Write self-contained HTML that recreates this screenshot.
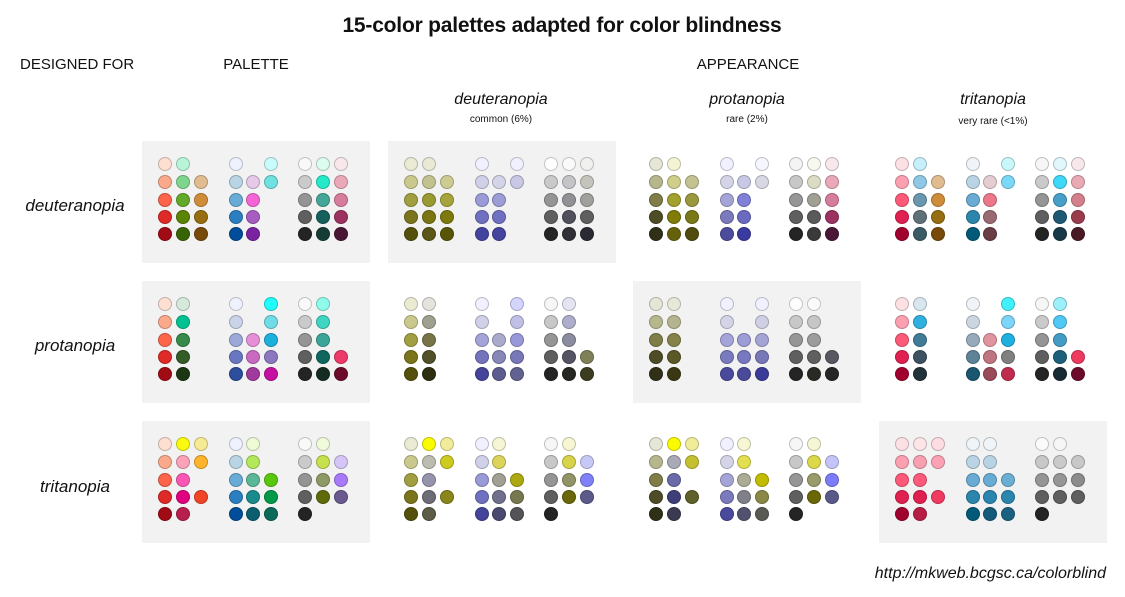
<!DOCTYPE html>
<html><head><meta charset="utf-8"><style>
body{margin:0;width:1125px;height:597px;background:#fff;position:relative;overflow:hidden;font-family:"Liberation Sans",sans-serif;color:#111}
.t{position:absolute;white-space:nowrap}
.p{position:absolute;width:228px;height:122px}
.g{background:#f2f2f2}
.d{position:absolute;width:12px;height:12px;border-radius:50%;border:1px solid rgba(0,0,0,0.22);box-sizing:content-box}
.c{transform:translateX(-50%)}
</style></head><body>
<div class="t c" style="left:562px;top:14px;font-size:21px;font-weight:bold;letter-spacing:-0.2px">15-color palettes adapted for color blindness</div>
<div class="t" style="left:20px;top:56px;font-size:15px">DESIGNED FOR</div>
<div class="t c" style="left:256px;top:56px;font-size:15px">PALETTE</div>
<div class="t c" style="left:748px;top:56px;font-size:15px">APPEARANCE</div>
<div class="t c" style="left:501px;top:91px;font-size:16px;font-style:italic">deuteranopia</div>
<div class="t c" style="left:501px;top:114px;font-size:10px">common (6%)</div>
<div class="t c" style="left:747px;top:91px;font-size:16px;font-style:italic">protanopia</div>
<div class="t c" style="left:747px;top:114px;font-size:10px">rare (2%)</div>
<div class="t c" style="left:993px;top:91px;font-size:16px;font-style:italic">tritanopia</div>
<div class="t c" style="left:993px;top:116px;font-size:10px">very rare (&lt;1%)</div>
<div class="t c" style="left:75px;top:196px;font-size:17px;font-style:italic">deuteranopia</div>
<div class="t c" style="left:75px;top:336px;font-size:17px;font-style:italic">protanopia</div>
<div class="t c" style="left:75px;top:477px;font-size:17px;font-style:italic">tritanopia</div>
<div class="t" style="right:19px;top:565px;font-size:16px;font-style:italic">http://mkweb.bcgsc.ca/colorblind</div>
<div id="root"></div>
<script>
var P={
P1:["fde0d2 b8f5d8 _ eef2ff _ c8fbfb f9f9f9 ddfcf0 f8e8ec","fba98a 80d58e e0bc90 b9d4e4 e6c8e8 70e0e0 cacaca 25e9c8 eaa8b8","fc654a 62a92b cf8d3a 69abd5 f665d6 _ 959595 42a796 d67c9c","df2a28 5b8304 966d10 2b7fc1 a65cc0 _ 5f5f5f 16605d 9c3260","a10b14 376506 784a0a 004d9a 7b22a0 _ 242424 163c36 4a1736"],
P2:["fde0d2 d6eadc _ eef2ff _ 1ffdfd f9f9f9 90fbeb _","fba98a 00c391 _ cad3e8 _ 70dce7 cacaca 40d4c3 _","fc654a 378a4a _ 9ca8d8 e590d6 1cb0dc 959595 3ba59a _","df2a28 335c28 _ 6878c0 c86ac0 8c78c0 5f5f5f 0e665e ee3a68","a10b14 1c3712 _ 2c4e9c a03a9c c610a2 242424 142c22 6c0c2a"],
P3:["fde0d2 fafa10 f6ea95 eef2ff eefbd6 _ f9f9f9 f0fbdb _","fba98a fba2b8 fdb42c b9d4e4 b2e85a _ cacaca c6e14e d6c6f8","fc654a fb56b6 _ 69abd5 5ab898 58c80c 959595 8e9a66 a97af8","df2a28 e00080 f04526 2b7fc1 1a8a8c 029948 5f5f5f 5f6a0a 6a5a90","a10b14 b81e4e _ 004d9a 0b5e6e 0b6a5a 242424 _ _"],
D1:["ebebd4 e9e9d6 _ f0f0ff _ f0f0fe fdfdfd fafafa f0f0ef","cbc88e c2c290 cccb92 d0d0e8 d4d4e8 c8c8e4 c9c9c9 c4c4c8 c4c4bc","a19f41 9a9932 a6a43a 9a9ad6 9c9cd6 _ 959595 919196 a0a09d","7a751a 7a7412 7e790c 7070c0 7070c2 _ 5f5f5f 50505c 5f5f60","55510c 5a5617 585606 44449e 44449e _ 242424 303036 2a2a34"],
R1:["e6e6d6 f4f4d4 _ f0f0ff _ f6f6fe f4f4f4 f8f8f0 f8e8ec","b7b78e cfce8a c3c290 d4d4e8 c8c8e6 d8d8e4 c8c8c8 dcdcc4 eaa8b8","7f7d48 a2a02e 9a983c a4a4d6 8080d8 _ 969696 a0a094 d67c9c","4e4c26 7f7c0a 7a7818 7a7abc 6a6ac0 _ 5f5f5f 5a5a5a 9c3260","303018 66620c 504c10 4c4c9c 3a3aa0 _ 242424 3a3a3a 4a1736"],
T1:["fce0e4 c6effc _ f0f4f8 _ c8f8fb f6f6f6 e0f8fc f8e8ec","fba0b0 8ec8e4 e0bc90 b9d4e4 e4ccd0 7cd8f8 cacaca 40d8f8 eaaab4","fc5a78 6a96ae cf8d3a 69abd5 ea7888 _ 959595 48a0c8 d4808c","e02050 607078 966d10 2b85ac 9a6a72 _ 5f5f5f 1e5a74 9a3c4c","a1002e 3a5a66 784a0a 005a78 6a3c44 _ 242424 183a48 4a1a24"],
D2:["ebebd4 e4e4dc _ f0f0ff _ d4d4fc f6f6f6 e4e4f4 _","cbc88e a0a090 _ d0d0e8 _ c0c0e6 c8c8c8 aeaecc _","a19f41 777548 _ a4a4d8 aaaacc 9898d8 959595 8c8ca0 _","7a751a 525028 _ 7474bc 8888b8 7878b8 5f5f5f 545464 808058","55510c 302e12 _ 44449a 5c5c90 626290 242424 262622 3c3c20"],
R2:["e6e6d6 e8e8d8 _ f0f0ff _ f0f0fe fdfdfd fafafa _","b7b78e b4b48e _ d4d4e8 _ d0d0e4 c8c8c8 c6c6c6 _","7f7d48 848248 _ a4a4d8 9c9cd6 a4a4d6 969696 9c9c9c _","4e4c26 5a5826 _ 7a7abe 7878c0 7878b8 5f5f5f 5f5f5f 585860","303018 3a3812 _ 4a4a9c 4a4a9a 3a3a98 242424 2a2a24 262626"],
T2:["fce0e4 d8e6f0 _ f0f4f8 _ 40f0fc f6f6f6 9cf0fa _","fba0b0 30b0e0 _ ccd6e0 _ 7cd4f8 cacaca 50c8f4 _","fc5a78 407c98 _ 96aabb e094a0 20b0e0 959595 449cc4 _","e02050 3c5260 _ 5e8298 c07480 808080 5f5f5f 1e607c ee3a60","a1002e 22323a _ 1a5670 9a4a58 c02c4e 242424 182a34 6c0c2a"],
D3:["ebebd4 fafa00 f0ec9a f0f0ff f6f6d4 _ f6f6f6 f6f6d4 _","cbc88e bcbcb0 cdca20 d0d0e8 dcd45a _ c8c8c8 d8d44a c8c8f6","a19f41 9494ac _ 9a9ad6 a0a094 aca810 959595 929468 8080f8","7a751a 6e6c76 8a861a 7070c0 70708c 787850 5f5f5f 6a680a 5c5a8a","55510c 5c5c48 _ 44449a 4a4a6e 545458 242424 _ _"],
R3:["e6e6d6 fafa00 f0ec9a f0f0ff f6f6d4 _ f6f6f6 f6f6d4 _","b7b78e aaaab6 c4c030 d4d4e8 e2e050 _ c8c8c8 dcd84a c4c4f8","7f7d48 6a6aaa _ a4a4d6 acac94 c2bc00 969696 9a9a6a 7c7cf8","4e4c26 3e3e78 60602a 7a7abc 808088 8a8846 5f5f5f 6a6806 5a5a8a","303018 3a3a50 _ 4a4a9c 525270 5a5a54 242424 _ _"],
T3:["fde0e4 fde6e8 fddce2 eef4f8 eef4f8 _ fafafa f6f6f6 _","fba0b0 f8a0b0 fca2b4 b9d4e4 b8d4e4 _ c8c8c8 cacaca c8c8c8","fc5a78 fc5a7a _ 69abd5 68acd4 6aaed4 959595 969696 8c8c8c","e02050 e02050 f03a60 2b85ac 2a86ae 2a86ac 5f5f5f 606060 5f5f5f","a1002e b81e44 _ 005a78 145a7a 1a6080 242424 _ _"]};
var cols=[142,388,633,879],rows=[141,281,421];
var layout=[["P1","D1","R1","T1"],["P2","D2","R2","T2"],["P3","D3","R3","T3"]];
var grey={P1:1,P2:1,P3:1,D1:1,R2:1,T3:1};
var xs=[23,41,59,94,111,129,163,181,199],ys=[23,41,59,76,93];
var h="";
for(var r=0;r<3;r++)for(var c=0;c<4;c++){var k=layout[r][c];
h+='<div class="p'+(grey[k]?' g':'')+'" style="left:'+cols[c]+'px;top:'+rows[r]+'px">';
P[k].forEach(function(line,i){line.split(" ").forEach(function(col,j){if(col!="_")h+='<div class="d" style="left:'+(xs[j]-7)+'px;top:'+(ys[i]-7)+'px;background:#'+col+'"></div>';});});
h+='</div>';}
document.getElementById("root").innerHTML=h;
</script>
</body></html>
